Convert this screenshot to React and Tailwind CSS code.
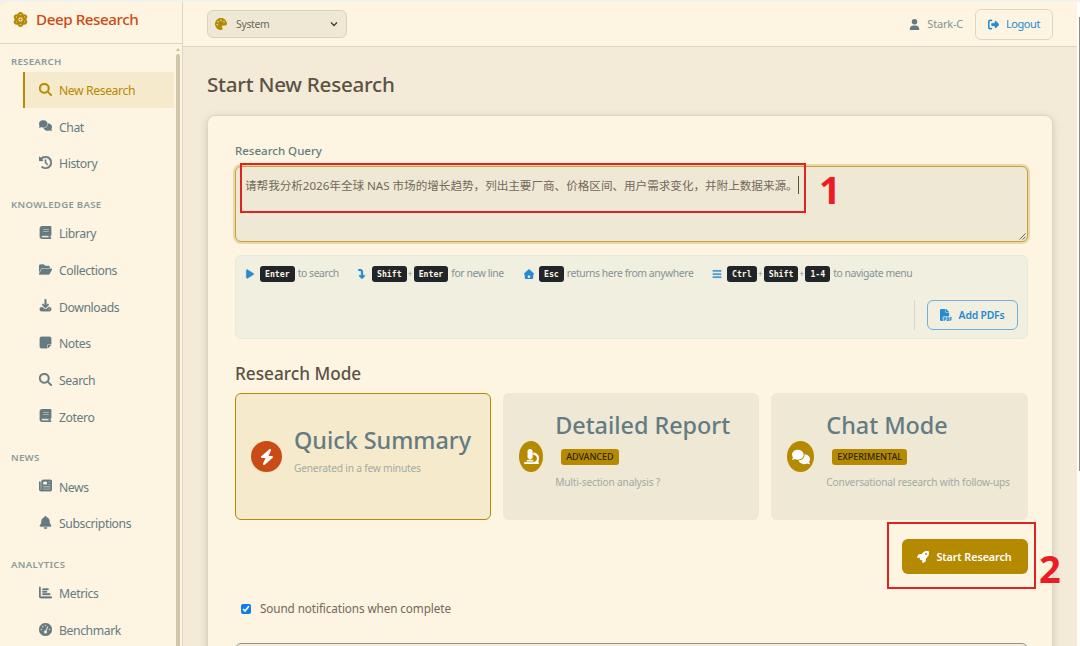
import { useState } from "react";
import {
    FaAtom,
    FaBars,
    FaBell,
    FaBolt,
    FaBook,
    FaChartBar,
    FaClockRotateLeft,
    FaComments,
    FaFilePdf,
    FaFolderOpen,
    FaGaugeHigh,
    FaMagnifyingGlass,
    FaMicroscope,
    FaNewspaper,
    FaNoteSticky,
    FaPalette,
    FaPlay,
    FaRightFromBracket,
    FaRocket,
    FaTurnDown,
    FaUser,
} from "react-icons/fa6";

function DownloadIcon({ className }) {
    return (
        <svg className={className} viewBox="0 0 448 512" fill="currentColor">
            <path d="M256 32c0-17.7-14.3-32-32-32s-32 14.3-32 32l0 210.7-41.4-41.4c-12.5-12.5-32.8-12.5-45.3 0s-12.5 32.8 0 45.3l96 96c12.5 12.5 32.8 12.5 45.3 0l96-96c12.5-12.5 12.5-32.8 0-45.3s-32.8-12.5-45.3 0L256 242.7 256 32zM64 320c-35.3 0-64 28.7-64 64l0 32c0 35.3 28.7 64 64 64l320 0c35.3 0 64-28.7 64-64l0-32c0-35.3-28.7-64-64-64l-46.9 0-56.6 56.6c-31.2 31.2-81.9 31.2-113.1 0L110.9 320 64 320zm304 56a24 24 0 1 1 0 48 24 24 0 1 1 0-48z" />
        </svg>
    );
}

function HomeIcon({ className }) {
    return (
        <svg className={className} viewBox="0 0 512 512" fill="currentColor">
            <path d="M278 20c-12-11-32-11-44 0L10 228c-10 9-13 23-8 35 5 13 17 21 30 21h16v164c0 35 29 64 64 64h288c35 0 64-29 64-64V284h16c13 0 25-8 30-21 5-12 2-26-8-35L278 20zM240 320h32c27 0 48 21 48 48v96H192v-96c0-27 21-48 48-48z" />
        </svg>
    );
}

const sections = [
    {
        title: "RESEARCH",
        items: [
            { label: "New Research", icon: FaMagnifyingGlass, active: true },
            { label: "Chat", icon: FaComments },
            { label: "History", icon: FaClockRotateLeft },
        ],
    },
    {
        title: "KNOWLEDGE BASE",
        items: [
            { label: "Library", icon: FaBook },
            { label: "Collections", icon: FaFolderOpen },
            { label: "Downloads", icon: DownloadIcon },
            { label: "Notes", icon: FaNoteSticky },
            { label: "Search", icon: FaMagnifyingGlass },
            { label: "Zotero", icon: FaBook },
        ],
    },
    {
        title: "NEWS",
        items: [
            { label: "News", icon: FaNewspaper },
            { label: "Subscriptions", icon: FaBell },
        ],
    },
    {
        title: "ANALYTICS",
        items: [
            { label: "Metrics", icon: FaChartBar },
            { label: "Benchmark", icon: FaGaugeHigh },
        ],
    },
];

function Sidebar() {
    return (
        <aside className="flex w-[183px] shrink-0 flex-col border-r border-[#ddd6c1] bg-[#fdf4e1]">
            <div className="flex h-[42px] shrink-0 items-center gap-[8px] border-b border-[#ddd6c1] pb-[6px] pl-[13px]">
                <FaAtom className="size-[15px] stroke-current stroke-[12px] text-[#b58900]" />
                <span className="text-[15.2px] font-medium tracking-[-0.45px] text-[#cb4b16]">Deep Research</span>
            </div>
            <div className="flex min-h-0 flex-1">
                <nav className="w-[174px] shrink-0 overflow-hidden">
                    {sections.map((section, index) => (
                        <div key={section.title}>
                            <div
                                className={
                                    index === 0
                                        ? "flex h-[27.7px] items-end pb-[3px] pl-[11px]"
                                        : "flex h-[33.3px] items-end pb-[3px] pl-[11px]"
                                }
                            >
                                <span className="text-[9.6px] leading-[14px] font-semibold tracking-[0.3px] text-[#8a9a9b]">
                                    {section.title}
                                </span>
                            </div>
                            {section.items.map((item) => (
                                <NavItem key={item.label} {...item} />
                            ))}
                        </div>
                    ))}
                </nav>
                <div className="ml-[2px] flex w-[4px] flex-col items-center">
                    <svg className="mt-[4px] mb-[3px] h-[3px] w-[4px] shrink-0" viewBox="0 0 4 3">
                        <path d="M2 0L4 3H0Z" fill="#c9c1a6" />
                    </svg>
                    <div className="w-[4px] flex-1 rounded-t-full bg-[#d0c6a9]" />
                </div>
            </div>
        </aside>
    );
}

function NavItem({ label, icon: Icon, active }) {
    return (
        <a
            className={
                active
                    ? "ml-[23px] flex h-[36.7px] items-center border-l-2 border-[#b58900] bg-[#f5eacb] pl-[13px] text-[#b58900]"
                    : "ml-[23px] flex h-[36.7px] items-center border-l-2 border-transparent pl-[13px] text-[#657b83]"
            }
        >
            <span className="flex w-[14px] justify-center pb-[2px]">
                <Icon className="size-[13px] stroke-current stroke-[14px]" />
            </span>
            <span className="ml-[7px] pt-[2px] text-[12.2px] tracking-[-0.4px] whitespace-nowrap">{label}</span>
        </a>
    );
}

function TopBar() {
    return (
        <header className="flex h-[45px] shrink-0 items-center justify-between border-b border-[#ddd6c1] bg-[#fdf4e1] pr-[24px] pl-[24px]">
            <button className="flex h-[28px] w-[140px] items-center rounded-[6px] border border-[#d8d1bc] bg-[#eee8d5] pr-[8px] pl-[7px]">
                <FaPalette className="size-[12px] text-[#b58900]" />
                <span className="ml-[9px] pt-[1px] text-[10.4px] tracking-[-0.3px] text-[#6d685a]">System</span>
                <svg className="ml-auto size-[8px]" viewBox="0 0 8 8" fill="none" stroke="#3f3d37" strokeWidth="1.3">
                    <path d="M1 2.5L4 5.5L7 2.5" />
                </svg>
            </button>
            <div className="flex items-center">
                <FaUser className="size-[11px] text-[#657b83]" />
                <span className="ml-[7px] text-[11px] tracking-[-0.2px] text-[#839496]">Stark-C</span>
                <button className="ml-[12px] flex h-[31px] w-[78px] items-center justify-center gap-[7px] rounded-[6px] border border-[#ddd6c1] text-[#268bd2]">
                    <FaRightFromBracket className="size-[11px] stroke-current stroke-[14px]" />
                    <span className="text-[11px] tracking-[-0.45px]">Logout</span>
                </button>
            </div>
        </header>
    );
}

function Key({ children }) {
    return (
        <kbd className="flex h-[16px] items-center rounded-[3px] bg-[#212529] px-[5px] font-['DejaVu_Sans_Mono','Liberation_Mono',monospace] text-[8.2px] font-bold text-[#fdf6e3]">
            {children}
        </kbd>
    );
}

function Hint({ icon: Icon, keys, text, className }) {
    return (
        <div className={className}>
            <Icon className="size-[10px] shrink-0 stroke-current stroke-[14px] text-[#268bd2]" />
            <div className="ml-[5px] flex items-center">
                {keys.map((key, index) => (
                    <div key={key} className="flex items-center">
                        {index > 0 && <span className="w-[7px] text-center text-[8px] text-[#839496]">+</span>}
                        <Key>{key}</Key>
                    </div>
                ))}
            </div>
            <span className="ml-[3px] text-[10.4px] tracking-[-0.43px] whitespace-nowrap text-[#839496]">{text}</span>
        </div>
    );
}

function ModeCard({ title, text, badge, icon: Icon, active, iconClass, glyphClass, bodyClass }) {
    return (
        <div
            className={
                active
                    ? "flex h-[127px] flex-1 items-center rounded-[6px] border border-[#b58900] bg-[#f5eacb] pl-[15px]"
                    : "flex h-[127px] flex-1 items-center rounded-[6px] border border-[#eee8d5] bg-[#eee8d5] pl-[15px]"
            }
        >
            <span className={iconClass}>
                <Icon className={glyphClass} />
            </span>
            <div className={bodyClass}>
                <h3 className="text-[23.4px] leading-[32px] font-medium tracking-[-0.03px] whitespace-nowrap text-[#657b83]">
                    {title}
                </h3>
                {badge ? (
                    <div className="flex h-[32px] items-center pl-[6px]">
                        <span className="flex h-[16px] items-center rounded-[3px] bg-[#b58900] px-[5px] text-[9px] font-medium tracking-[-0.05px] text-[#2b2410]">
                            {badge}
                        </span>
                    </div>
                ) : (
                    <div className="h-[3px]" />
                )}
                <p className="text-[10.2px] leading-[18px] tracking-[-0.2px] whitespace-nowrap text-[#a3aaa3]">{text}</p>
            </div>
        </div>
    );
}

export default function App() {
    const [query, setQuery] = useState(
        "请帮我分析2026年全球 NAS 市场的增长趋势，列出主要厂商、价格区间、用户需求变化，并附上数据来源。"
    );
    const [sound, setSound] = useState(true);

    return (
        <div className="relative flex h-[646px] w-[1080px] overflow-hidden bg-[#f3f1ee] pt-[2px] font-['Noto_Sans','Noto_Sans_CJK_SC',sans-serif]">
            <div className="flex min-w-0 flex-1 overflow-hidden rounded-tl-[6px] bg-[#f3ebd8]">
                <Sidebar />
                <div className="flex min-w-0 flex-1 flex-col">
                    <TopBar />
                    <main className="flex min-h-0 flex-1 flex-col overflow-hidden px-[24px]">
                        <h1 className="mt-[22px] text-[20.6px] leading-[30px] font-medium tracking-[-0.25px] text-[#5b5244]">
                            Start New Research
                        </h1>
                        <section className="mt-[16px] h-[600px] w-[846px] shrink-0 rounded-[8px] border border-[#ddd6c1] bg-[#fdf4e1] pt-[26px] pr-[24.5px] pl-[27px] shadow-[0_2px_8px_rgba(0,0,0,0.15)]">
                            <label className="block h-[24px] text-[11.5px] leading-[18px] font-medium text-[#657b83]">
                                Research Query
                            </label>
                            <div className="relative h-[76px] rounded-[6px] border border-[#c5a13a] bg-[#eee8d5] px-[9px] pt-[9px] shadow-[0_0_0_2px_rgba(181,137,0,0.25)]">
                                <div className="flex h-[18px]">
                                    <div
                                        contentEditable
                                        suppressContentEditableWarning
                                        onBlur={(e) => setQuery(e.target.textContent)}
                                        className="border-r border-[#5b5244] text-[11.6px] leading-[19px] tracking-[-0.02px] whitespace-nowrap text-[#73695a] outline-none"
                                    >
                                        {query}
                                    </div>
                                </div>
                                <svg
                                    className="absolute right-[1px] bottom-[1px] size-[7px]"
                                    viewBox="0 0 7 7"
                                    stroke="#555"
                                    strokeWidth="0.9"
                                >
                                    <path d="M0.5 6.5L6.5 0.5M3.7 6.5L6.5 3.7" />
                                </svg>
                            </div>

                            <div className="mt-[13px] h-[84px] rounded-[6px] border border-[#e6eadd] bg-[#f1efe0] px-[9px] pt-[10px]">
                                <div className="flex h-[16px] items-center">
                                    <Hint
                                        className="flex w-[112px] items-center"
                                        icon={FaPlay}
                                        keys={["Enter"]}
                                        text="to search"
                                    />
                                    <Hint
                                        className="flex w-[167px] items-center"
                                        icon={FaTurnDown}
                                        keys={["Shift", "Enter"]}
                                        text="for new line"
                                    />
                                    <Hint
                                        className="flex w-[188px] items-center"
                                        icon={HomeIcon}
                                        keys={["Esc"]}
                                        text="returns here from anywhere"
                                    />
                                    <Hint
                                        className="flex items-center"
                                        icon={FaBars}
                                        keys={["Ctrl", "Shift", "1-4"]}
                                        text="to navigate menu"
                                    />
                                </div>
                                <div className="mt-[18px] flex justify-end">
                                    <div className="border-l border-[#ddd6c1] pl-[12px]">
                                        <button className="flex h-[30px] w-[91px] items-center justify-center gap-[7px] rounded-[6px] border border-[#6fb0dc] text-[#268bd2]">
                                            <FaFilePdf className="size-[12px] stroke-current stroke-[12px]" />
                                            <span className="pt-[1px] text-[10.4px] font-semibold tracking-[-0.2px]">
                                                Add PDFs
                                            </span>
                                        </button>
                                    </div>
                                </div>
                            </div>

                            <h2 className="mt-[22px] text-[17.2px] leading-[26px] font-medium text-[#5b5244]">
                                Research Mode
                            </h2>
                            <div className="mt-[6px] flex gap-[12px]">
                                <ModeCard
                                    active
                                    title="Quick Summary"
                                    text="Generated in a few minutes"
                                    icon={FaBolt}
                                    iconClass="flex h-[31px] w-[31px] shrink-0 items-center justify-center rounded-[50%] bg-[#cb4b16] text-white"
                                    glyphClass="size-[16px]"
                                    bodyClass="ml-[12px] pb-[12px]"
                                />
                                <ModeCard
                                    title="Detailed Report"
                                    badge="ADVANCED"
                                    text="Multi-section analysis ?"
                                    icon={FaMicroscope}
                                    iconClass="flex h-[31px] w-[24px] shrink-0 items-center justify-center rounded-[50%] bg-[#b58900] text-white"
                                    glyphClass="size-[15px] stroke-current stroke-[14px]"
                                    bodyClass="ml-[12px] pb-[13px]"
                                />
                                <ModeCard
                                    title="Chat Mode"
                                    badge="EXPERIMENTAL"
                                    text="Conversational research with follow-ups"
                                    icon={FaComments}
                                    iconClass="flex h-[31px] w-[27px] shrink-0 items-center justify-center rounded-[50%] bg-[#b58900] text-white"
                                    glyphClass="size-[18px]"
                                    bodyClass="ml-[12px] pb-[13px]"
                                />
                            </div>

                            <div className="mt-[19px] flex justify-end">
                                <button className="flex h-[35px] w-[126px] items-center justify-center gap-[7px] rounded-[6px] bg-[#b58900] pt-[1px] text-white">
                                    <FaRocket className="size-[12px]" />
                                    <span className="text-[10.8px] font-semibold tracking-[-0.1px]">Start Research</span>
                                </button>
                            </div>

                            <label className="mt-[26px] flex h-[18px] items-center pl-[6px]">
                                <input
                                    type="checkbox"
                                    checked={sound}
                                    onChange={(e) => setSound(e.target.checked)}
                                    className="size-[10px] accent-[#0d7bf2]"
                                />
                                <span className="ml-[9px] text-[11.7px] tracking-[-0.08px] text-[#73695a]">
                                    Sound notifications when complete
                                </span>
                            </label>
                            <div className="mt-[25px] h-[40px] rounded-[6px] border border-[#8f9390] bg-[#f5eedb]" />
                        </section>
                    </main>
                </div>
            </div>

            {/* Window scrollbar */}
            <div className="w-[3px] shrink-0 bg-white pt-[15px] pl-[2px]">
                <div className="h-[454px] bg-[#8b8b8b]" />
            </div>

            {/* Step markers */}
            <div className="absolute top-[163px] left-[240px] h-[50px] w-[566px] border-2 border-[#e02225]" />
            <span className="absolute top-[162px] left-[819px] font-['Open_Sans',sans-serif] text-[38px] leading-[54px] font-bold text-[#ec1c24]">
                1
            </span>
            <div className="absolute top-[522px] left-[887px] h-[67px] w-[149px] border-2 border-[#e02225]" />
            <span className="absolute top-[541px] left-[1039px] font-['Open_Sans',sans-serif] text-[38px] leading-[54px] font-bold text-[#ec1c24]">
                2
            </span>
        </div>
    );
}
